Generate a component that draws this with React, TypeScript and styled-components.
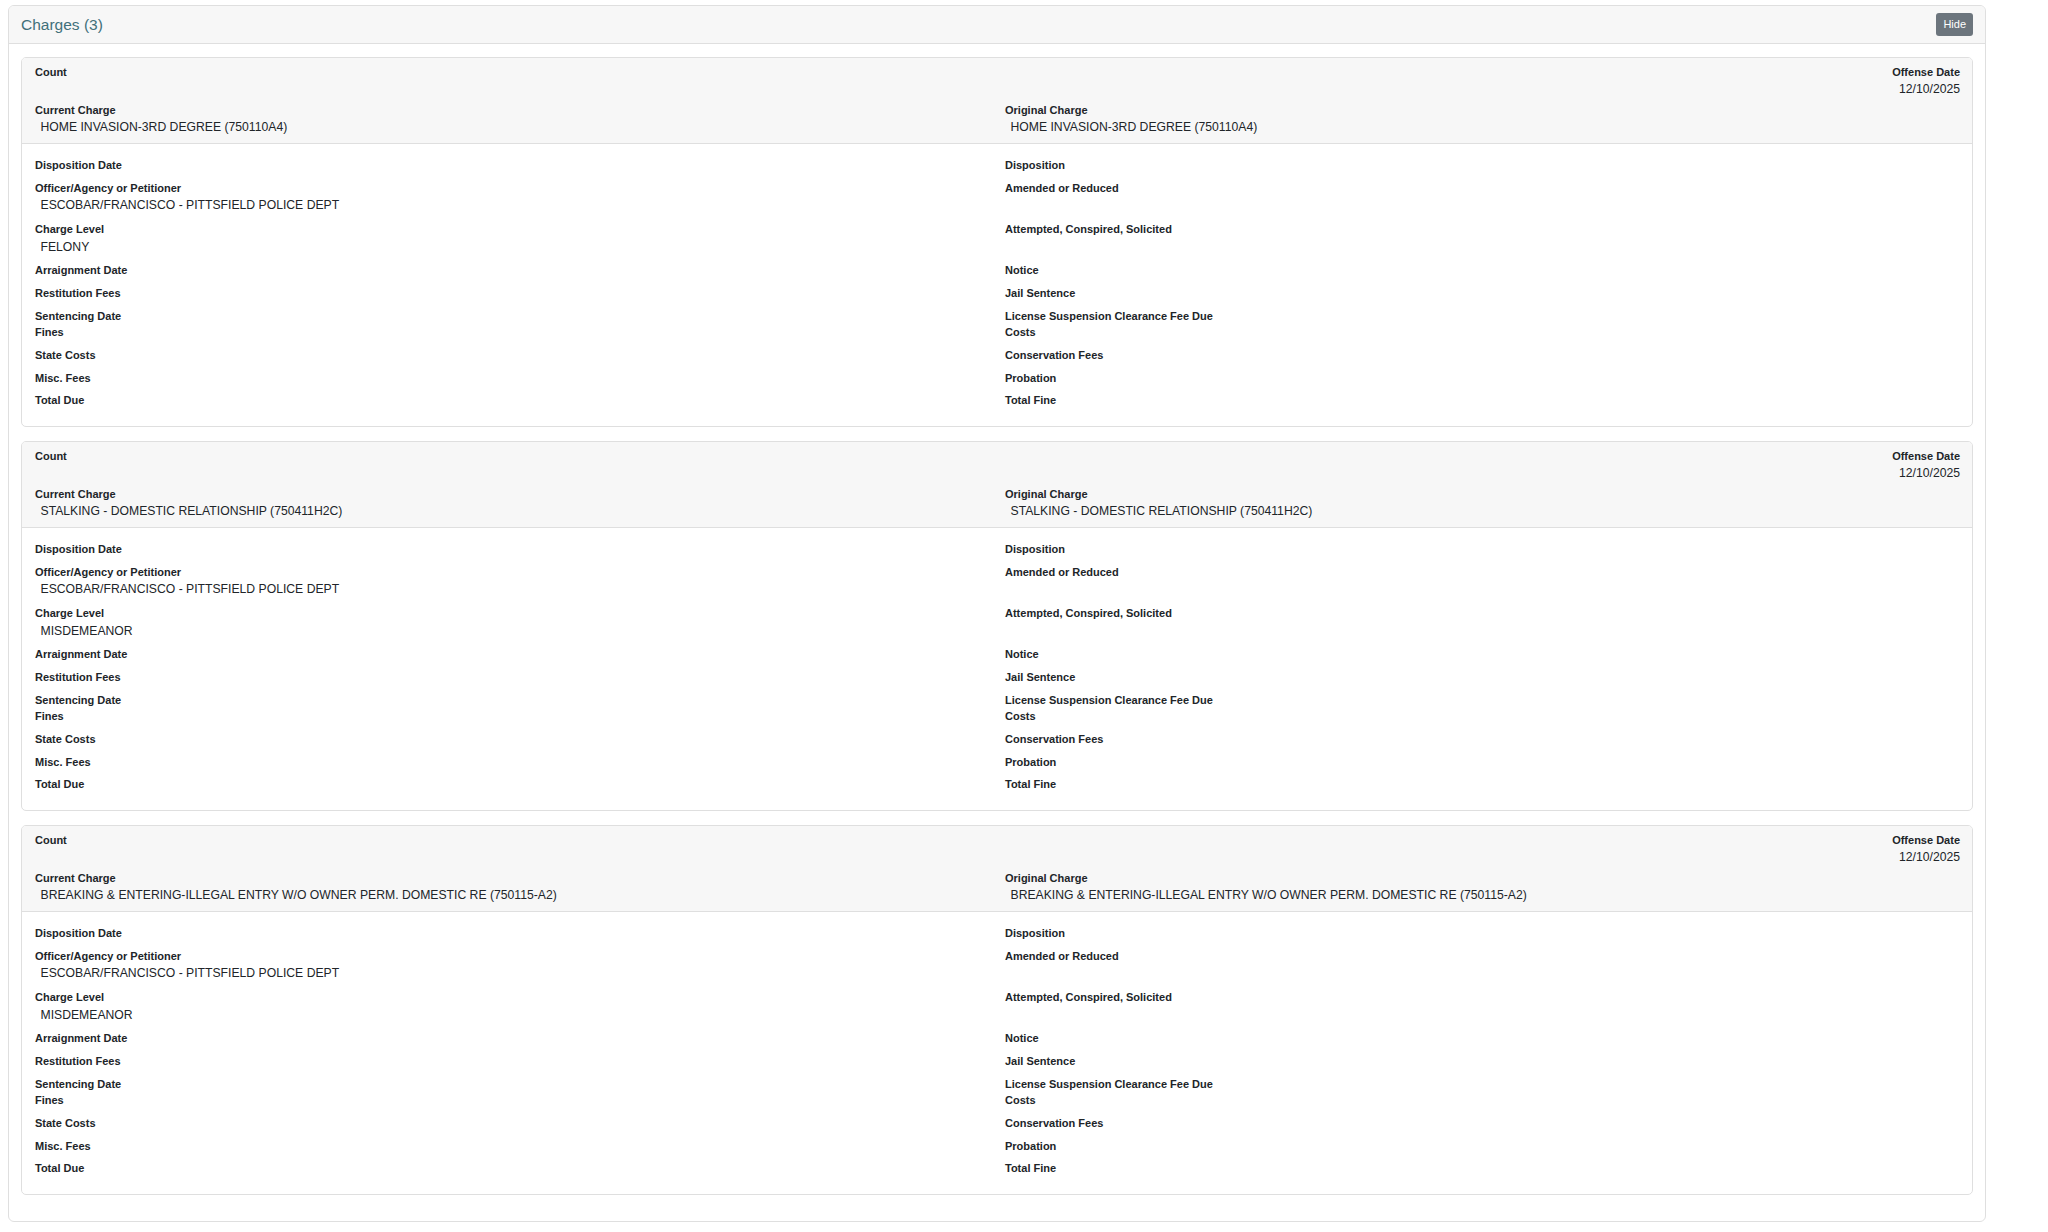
import React from "react";
import styled, { createGlobalStyle } from "styled-components";

const GlobalStyle = createGlobalStyle`
  html, body { margin: 0; padding: 0; background: #ffffff; }
  body {
    font-family: "Liberation Sans", Arial, Helvetica, sans-serif;
    color: #212529;
  }
  * { box-sizing: border-box; }
`;

const Page = styled.div`
  padding: 5px 0 0 8px;
`;

const Panel = styled.section`
  width: 1978px;
  border: 1px solid #dfdfdf;
  border-radius: 6px;
  background: #ffffff;
  overflow: hidden;
`;

const PanelHeader = styled.header`
  display: flex;
  align-items: center;
  justify-content: space-between;
  padding: 7px 12px;
  background: #f7f7f7;
  border-bottom: 1px solid #dfdfdf;
`;

const PanelTitle = styled.h2`
  margin: 0;
  font-size: 15.5px;
  font-weight: 400;
  line-height: 23px;
  color: #41707a;
`;

const HideButton = styled.button`
  height: 23px;
  padding: 0 7px;
  border: none;
  border-radius: 3px;
  background: #6c757d;
  color: #ffffff;
  font-family: inherit;
  font-size: 11px;
  line-height: 23px;
  cursor: pointer;
`;

const PanelBody = styled.div`
  padding: 13px 12px 12px 12px;
`;

const ChargeCard = styled.article`
  border: 1px solid #dfdfdf;
  border-radius: 5px;
  margin-bottom: 14px;
  overflow: hidden;
`;

const CardHeader = styled.div`
  display: grid;
  grid-template-columns: 1fr 1fr;
  column-gap: 15px;
  row-gap: 2.8px;
  padding: 5.65px 12px 6.15px 13px;
  background: #f7f7f7;
  border-bottom: 1px solid #dfdfdf;
`;

const CardBody = styled.div`
  display: grid;
  grid-template-columns: 1fr 1fr;
  column-gap: 15px;
  row-gap: 6px;
  padding: 13px 12px 17px 13px;
`;

const Field = styled.div<{ $right?: boolean }>`
  display: flex;
  flex-direction: column;
  align-items: ${(p) => (p.$right ? "flex-end" : "flex-start")};
`;

const Label = styled.div`
  font-size: 11px;
  font-weight: 700;
  line-height: 16.7px;
  white-space: nowrap;
`;

const Value = styled.div<{ $right?: boolean }>`
  font-size: 12.2px;
  line-height: 18.5px;
  padding-left: ${(p) => (p.$right ? "0" : "5.5px")};
  white-space: nowrap;
`;

type Cell = { labels: string[]; value?: string };

type Charge = {
  current: string;
  original: string;
  officer: string;
  level: string;
};

const charges: Charge[] = [
  {
    current: "HOME INVASION-3RD DEGREE (750110A4)",
    original: "HOME INVASION-3RD DEGREE (750110A4)",
    officer: "ESCOBAR/FRANCISCO - PITTSFIELD POLICE DEPT",
    level: "FELONY",
  },
  {
    current: "STALKING - DOMESTIC RELATIONSHIP (750411H2C)",
    original: "STALKING - DOMESTIC RELATIONSHIP (750411H2C)",
    officer: "ESCOBAR/FRANCISCO - PITTSFIELD POLICE DEPT",
    level: "MISDEMEANOR",
  },
  {
    current:
      "BREAKING & ENTERING-ILLEGAL ENTRY W/O OWNER PERM. DOMESTIC RE (750115-A2)",
    original:
      "BREAKING & ENTERING-ILLEGAL ENTRY W/O OWNER PERM. DOMESTIC RE (750115-A2)",
    officer: "ESCOBAR/FRANCISCO - PITTSFIELD POLICE DEPT",
    level: "MISDEMEANOR",
  },
];

const bodyRows = (c: Charge): [Cell, Cell][] => [
  [{ labels: ["Disposition Date"] }, { labels: ["Disposition"] }],
  [
    { labels: ["Officer/Agency or Petitioner"], value: c.officer },
    { labels: ["Amended or Reduced"] },
  ],
  [
    { labels: ["Charge Level"], value: c.level },
    { labels: ["Attempted, Conspired, Solicited"] },
  ],
  [{ labels: ["Arraignment Date"] }, { labels: ["Notice"] }],
  [{ labels: ["Restitution Fees"] }, { labels: ["Jail Sentence"] }],
  [
    { labels: ["Sentencing Date", "Fines"] },
    { labels: ["License Suspension Clearance Fee Due", "Costs"] },
  ],
  [{ labels: ["State Costs"] }, { labels: ["Conservation Fees"] }],
  [{ labels: ["Misc. Fees"] }, { labels: ["Probation"] }],
  [{ labels: ["Total Due"] }, { labels: ["Total Fine"] }],
];

const FieldView: React.FC<{ cell: Cell; right?: boolean }> = ({ cell, right }) => (
  <Field $right={right}>
    {cell.labels.map((l) => (
      <Label key={l}>{l}</Label>
    ))}
    {cell.value !== undefined && <Value $right={right}>{cell.value}</Value>}
  </Field>
);

const ChargeView: React.FC<{ charge: Charge }> = ({ charge }) => (
  <ChargeCard>
    <CardHeader>
      <FieldView cell={{ labels: ["Count"] }} />
      <FieldView cell={{ labels: ["Offense Date"], value: "12/10/2025" }} right />
      <FieldView cell={{ labels: ["Current Charge"], value: charge.current }} />
      <FieldView cell={{ labels: ["Original Charge"], value: charge.original }} />
    </CardHeader>
    <CardBody>
      {bodyRows(charge).map(([l, r], i) => (
        <React.Fragment key={i}>
          <FieldView cell={l} />
          <FieldView cell={r} />
        </React.Fragment>
      ))}
    </CardBody>
  </ChargeCard>
);

export default function App() {
  return (
    <>
      <GlobalStyle />
      <Page>
        <Panel>
          <PanelHeader>
            <PanelTitle>Charges (3)</PanelTitle>
            <HideButton type="button">Hide</HideButton>
          </PanelHeader>
          <PanelBody>
            {charges.map((c, i) => (
              <ChargeView key={i} charge={c} />
            ))}
          </PanelBody>
        </Panel>
      </Page>
    </>
  );
}
